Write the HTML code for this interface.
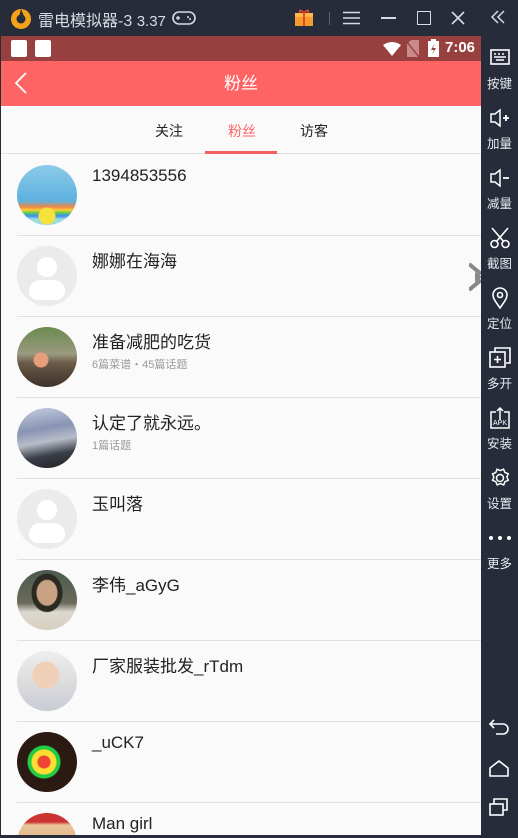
<!DOCTYPE html>
<html><head><meta charset="utf-8"><style>
*{margin:0;padding:0;box-sizing:border-box}
body{width:518px;height:838px;overflow:hidden;background:#262c3a;font-family:"Liberation Sans","Noto Sans CJK SC",sans-serif;position:relative}
.a{position:absolute}
.tb{left:0;top:0;width:518px;height:36px;background:#262c3a;color:#d8dbe0}
.app{left:1px;top:36px;width:480px;height:799px;background:#fafafa;overflow:hidden}
.sb{left:0;top:0;width:480px;height:25px;background:#983f40}
.hd{left:0;top:25px;width:480px;height:45px;background:#ff6464;color:#fff;font-size:17px;text-align:center;line-height:45px}
.tabs{left:0;top:70px;width:480px;height:48px;background:#fafafa;border-bottom:1px solid #e2e2e2;font-size:14px}
.av{width:60px;height:60px;border-radius:50%;overflow:hidden}
.nm{font-size:17px;color:#222}
.sub{font-size:11px;color:#999}
.dv{left:16px;width:464px;height:1px;background:#e0e0e0}
.side{left:481px;top:36px;width:37px;height:802px;background:#262c3a;color:#e8eaee;font-size:12.5px;text-align:center}
.si{position:absolute;left:0;width:37px}
.si span{position:absolute;left:0;width:37px;top:27px}
</style></head><body>
<div class="a tb">
  <svg class="a" style="left:10px;top:8px" width="22" height="22" viewBox="0 0 22 22"><circle cx="11" cy="11" r="10" fill="#f5a21b"/><circle cx="11" cy="11" r="4.5" fill="#262c3a"/><path d="M11 1 L9 9 L14 8 Z" fill="#262c3a"/></svg>
  <div class="a" style="left:38px;top:7px;font-size:16px">雷电模拟器-3 <span style="font-size:15px">3.37</span></div>
  <svg class="a" style="left:172px;top:10px" width="24" height="16" viewBox="0 0 24 16"><rect x="1" y="2" width="22" height="12" rx="6" fill="none" stroke="#d8dbe0" stroke-width="1.6"/><path d="M6 6v4M4 8h4" stroke="#d8dbe0" stroke-width="1.4"/><circle cx="16" cy="7" r="1" fill="#d8dbe0"/><circle cx="18" cy="9" r="1" fill="#d8dbe0"/></svg>
  <svg class="a" style="left:294px;top:7px" width="20" height="20" viewBox="0 0 20 20"><rect x="1" y="6" width="18" height="13" fill="#f39b2c"/><rect x="1" y="6" width="18" height="4" fill="#ffb84a"/><rect x="9" y="6" width="2" height="13" fill="#e8472e"/><path d="M10 6 C6 1 4 4 7 6 M10 6 C14 1 16 4 13 6" stroke="#e8472e" fill="none" stroke-width="1.5"/></svg>
  <div class="a" style="left:329px;top:12px;width:1px;height:13px;background:#596070"></div>
  <svg class="a" style="left:343px;top:11px" width="17" height="14"><path d="M0 1.5h17M0 7h17M0 12.5h17" stroke="#d8dbe0" stroke-width="1.6"/></svg>
  <div class="a" style="left:381px;top:17px;width:15px;height:2px;background:#d8dbe0"></div>
  <div class="a" style="left:417px;top:11px;width:14px;height:14px;border:1.6px solid #d8dbe0"></div>
  <svg class="a" style="left:451px;top:11px" width="14" height="14"><path d="M1 1L13 13M13 1L1 13" stroke="#d8dbe0" stroke-width="1.6"/></svg>
  <svg class="a" style="left:490px;top:10px" width="16" height="14"><path d="M8 1L2 7L8 13M14 1L8 7L14 13" stroke="#d8dbe0" stroke-width="1.5" fill="none"/></svg>
</div>
<div class="a" style="left:0;top:36px;width:1px;height:802px;background:#262c3a"></div>
<div class="a app">
  <div class="a sb">
    <div class="a" style="left:10px;top:4px;width:16px;height:17px;background:#fff;border-radius:2px"></div>
    <div class="a" style="left:34px;top:4px;width:16px;height:17px;background:#fff;border-radius:2px"></div>
    <svg class="a" style="left:382px;top:6px" width="18" height="14"><path d="M0 3 Q9 -3 18 3 L9 14 Z" fill="#fff"/></svg>
    <svg class="a" style="left:406px;top:4px" width="12" height="17"><path d="M0 17V4L4 0H12V17Z" fill="#c98a8a"/><path d="M0 2L12 17" stroke="#983f40" stroke-width="1.4"/></svg>
    <svg class="a" style="left:427px;top:3px" width="11" height="18"><rect x="0" y="2" width="11" height="16" fill="#fff"/><rect x="3" y="0" width="5" height="3" fill="#fff"/><path d="M7 4L3 11H6L4 16L8 9H5Z" fill="#983f40"/></svg>
    <div class="a" style="left:444px;top:3px;font-size:15px;font-weight:bold;color:#fff">7:06</div>
  </div>
  <div class="a hd">粉丝
    <svg class="a" style="left:13px;top:11px" width="14" height="22"><path d="M12 1L2 11L12 21" stroke="#fff" stroke-width="1.8" fill="none"/></svg>
  </div>
  <div class="a tabs">
    <div class="a" style="left:154px;top:15px;color:#222">关注</div>
    <div class="a" style="left:227px;top:15px;color:#ff6464">粉丝</div>
    <div class="a" style="left:299px;top:15px;color:#222">访客</div>
    <div class="a" style="left:204px;top:45px;width:72px;height:3px;background:#f06060"></div>
  </div>

  <div class="a av" style="left:16px;top:129px;background:radial-gradient(circle at 50% 85%,#f7e13c 0 8px,transparent 9px),linear-gradient(#8ccbe8,#5db0df 60%,#e84 70%,#fc3 75%,#5c5 80%,#48f 85%,#9dd 90%)"></div>
  <div class="a nm" style="left:91px;top:130px">1394853556</div>
  <div class="a dv" style="top:199px"></div>

  <div class="a av" style="left:16px;top:210px;background:#ebebeb"><div class="a" style="left:20px;top:11px;width:20px;height:20px;border-radius:50%;background:#fff"></div><div class="a" style="left:12px;top:34px;width:36px;height:20px;border-radius:18px 18px 14px 14px;background:#fff"></div></div>
  <div class="a nm" style="left:91px;top:211px">娜娜在海海</div>
  <div class="a dv" style="top:280px"></div>

  <div class="a av" style="left:16px;top:291px;background:radial-gradient(circle at 40% 55%,#e89e7a 0 7px,transparent 8px),linear-gradient(#6a8a50,#9a9a80 45%,#6b5a48 60%,#3c3228)"></div>
  <div class="a nm" style="left:91px;top:292px">准备减肥的吃货</div>
  <div class="a sub" style="left:91px;top:320px">6篇菜谱・45篇话题</div>
  <div class="a dv" style="top:361px"></div>

  <div class="a av" style="left:16px;top:372px;background:linear-gradient(170deg,#c9d0e0,#8894b4 35%,#b8bcc8 55%,#3a3e48 75%,#222)"></div>
  <div class="a nm" style="left:91px;top:373px">认定了就永远。</div>
  <div class="a sub" style="left:91px;top:401px">1篇话题</div>
  <div class="a dv" style="top:442px"></div>

  <div class="a av" style="left:16px;top:453px;background:#ebebeb"><div class="a" style="left:20px;top:11px;width:20px;height:20px;border-radius:50%;background:#fff"></div><div class="a" style="left:12px;top:34px;width:36px;height:20px;border-radius:18px 18px 14px 14px;background:#fff"></div></div>
  <div class="a nm" style="left:91px;top:454px">玉叫落</div>
  <div class="a dv" style="top:523px"></div>

  <div class="a av" style="left:16px;top:534px;background:radial-gradient(ellipse at 50% 38%,#c9a183 0 10px,#2a2a22 11px 15px,transparent 16px),linear-gradient(#4c5a50,#6b6a58 55%,#dcd8d0 70%,#d8d0c0)"></div>
  <div class="a nm" style="left:91px;top:535px">李伟_aGyG</div>
  <div class="a dv" style="top:604px"></div>

  <div class="a av" style="left:16px;top:615px;background:radial-gradient(circle at 48% 40%,#f0cfb8 0 13px,transparent 14px),linear-gradient(#eee,#ddd 50%,#c8ccd4)"></div>
  <div class="a nm" style="left:91px;top:616px">厂家服装批发_rTdm</div>
  <div class="a dv" style="top:685px"></div>

  <div class="a av" style="left:16px;top:696px;background:radial-gradient(circle at 45% 50%,#e43 0 6px,#fd3 7px 12px,#2c4 13px 16px,transparent 17px),#2a1a12"></div>
  <div class="a nm" style="left:91px;top:697px">_uCK7</div>
  <div class="a dv" style="top:766px"></div>

  <div class="a av" style="left:16px;top:777px;background:linear-gradient(#c33 0 15%,#e9c49a 20%,#d8a070)"></div>
  <div class="a nm" style="left:91px;top:778px">Man girl</div>

  <svg class="a" style="left:468px;top:224px" width="14" height="34"><path d="M0 4L12 14M0 30L12 20" stroke="#888" stroke-width="4"/><path d="M6 12L13 17L6 22Z" fill="#888"/></svg>
</div>
<div class="a" style="left:0;top:835px;width:481px;height:3px;background:#262c3a"></div>

<div class="a side">
  <div class="si" style="top:10px"><svg width="20" height="17" style="margin-top:3px"><rect x="1" y="1" width="18" height="14" fill="none" stroke="#fff" stroke-width="1.6"/><path d="M4 5h2M8 5h2M12 5h2M4 8h12M6 11h8" stroke="#fff" stroke-width="1.4"/></svg><span>按键</span></div>
  <div class="si" style="top:70px"><svg width="24" height="20" style="margin-top:2px"><path d="M3 6h4l5-4v16l-5-4H3Z" fill="none" stroke="#fff" stroke-width="1.5"/><path d="M15 10h6M18 7v6" stroke="#fff" stroke-width="1.8"/></svg><span>加量</span></div>
  <div class="si" style="top:130px"><svg width="24" height="20" style="margin-top:2px"><path d="M3 6h4l5-4v16l-5-4H3Z" fill="none" stroke="#fff" stroke-width="1.5"/><path d="M15 10h6" stroke="#fff" stroke-width="1.8"/></svg><span>减量</span></div>
  <div class="si" style="top:190px"><svg width="22" height="22" style="margin-top:1px"><path d="M3 1L15 15M19 1L7 15" stroke="#fff" stroke-width="1.6"/><circle cx="5.5" cy="17" r="3.5" fill="none" stroke="#fff" stroke-width="1.6"/><circle cx="16.5" cy="17" r="3.5" fill="none" stroke="#fff" stroke-width="1.6"/></svg><span>截图</span></div>
  <div class="si" style="top:250px"><svg width="18" height="22" style="margin-top:1px"><path d="M9 21C4 14 2 11 2 8A7 7 0 0 1 16 8C16 11 14 14 9 21Z" fill="none" stroke="#fff" stroke-width="1.6"/><circle cx="9" cy="8" r="2.5" fill="none" stroke="#fff" stroke-width="1.6"/></svg><span>定位</span></div>
  <div class="si" style="top:310px"><svg width="22" height="22" style="margin-top:1px"><path d="M6 5V1h15v15h-4" fill="none" stroke="#fff" stroke-width="1.6"/><rect x="1" y="5" width="15" height="15" fill="none" stroke="#fff" stroke-width="1.6"/><path d="M5 12.5h7M8.5 9v7" stroke="#fff" stroke-width="1.6"/></svg><span>多开</span></div>
  <div class="si" style="top:370px"><svg width="22" height="22" style="margin-top:1px"><path d="M7 5H2v16h18V5h-5M11 13V1M8 4l3-3l3 3" fill="none" stroke="#fff" stroke-width="1.5"/><text x="11" y="18" font-size="7" fill="#fff" text-anchor="middle" font-family="Liberation Sans">APK</text></svg><span>安装</span></div>
  <div class="si" style="top:430px"><svg width="22" height="22" style="margin-top:1px"><path d="M11 1.5l2.5 2.5h3.5v3.5l2.5 2.5l-2.5 2.5v3.5h-3.5l-2.5 2.5l-2.5-2.5h-3.5v-3.5l-2.5-2.5l2.5-2.5v-3.5h3.5Z" fill="none" stroke="#fff" stroke-width="1.5" transform="rotate(22 11 11)"/><circle cx="11" cy="11" r="3.5" fill="none" stroke="#fff" stroke-width="1.5"/></svg><span>设置</span></div>
  <div class="si" style="top:490px"><svg width="24" height="6" style="margin-top:9px"><circle cx="3" cy="3" r="2" fill="#fff"/><circle cx="12" cy="3" r="2" fill="#fff"/><circle cx="21" cy="3" r="2" fill="#fff"/></svg><span>更多</span></div>
  <svg class="a" style="left:7px;top:682px" width="22" height="18"><path d="M6 2L2 6L6 10M2 6h13a5 5 0 0 1 0 10H8" fill="none" stroke="#fff" stroke-width="1.6"/></svg>
  <svg class="a" style="left:7px;top:723px" width="22" height="18"><path d="M2 17V9L11 2L20 9V17Z" fill="none" stroke="#fff" stroke-width="1.6"/></svg>
  <svg class="a" style="left:8px;top:762px" width="20" height="18"><rect x="1" y="6" width="13" height="11" fill="none" stroke="#fff" stroke-width="1.6"/><path d="M5 6V1h13v11h-4" fill="none" stroke="#fff" stroke-width="1.6"/></svg>
</div>
</body></html>
